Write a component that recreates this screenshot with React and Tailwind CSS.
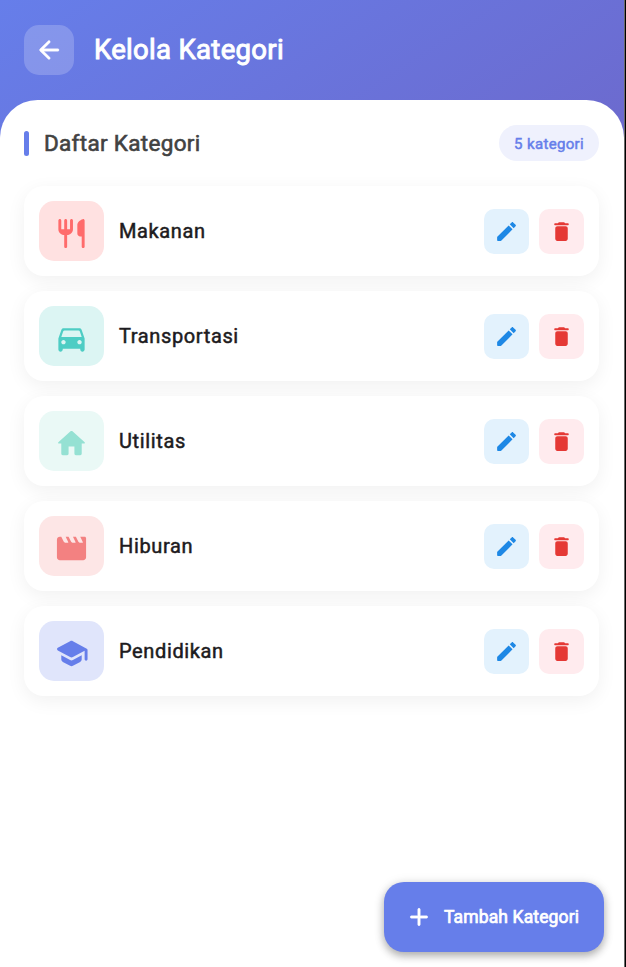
const ICONS = {
  back: 'M19 11H7.83l4.88-4.88c.39-.39.39-1.03 0-1.42-.39-.39-1.02-.39-1.41 0l-6.59 6.59c-.39.39-.39 1.02 0 1.41l6.59 6.59c.39.39 1.02.39 1.41 0 .39-.39.39-1.02 0-1.41L7.83 13H19c.55 0 1-.45 1-1s-.45-1-1-1z',
  add: 'M18 13h-5v5c0 .55-.45 1-1 1s-1-.45-1-1v-5H6c-.55 0-1-.45-1-1s.45-1 1-1h5V6c0-.55.45-1 1-1s1 .45 1 1v5h5c.55 0 1 .45 1 1s-.45 1-1 1z',
  edit: 'M3 17.46v3.04c0 .28.22.5.5.5h3.04c.13 0 .26-.05.35-.15L17.81 9.94l-3.75-3.75L3.15 17.1c-.1.1-.15.22-.15.36zM20.71 7.04c.39-.39.39-1.02 0-1.41l-2.34-2.34c-.39-.39-1.02-.39-1.41 0l-1.83 1.83 3.75 3.75 1.83-1.83z',
  trash: 'M6 19c0 1.1.9 2 2 2h8c1.1 0 2-.9 2-2V9c0-1.1-.9-2-2-2H8c-1.1 0-2 .9-2 2v10zM18 4h-2.5l-.71-.71c-.18-.18-.44-.29-.7-.29H9.91c-.26 0-.52.11-.7.29L8.5 4H6c-.55 0-1 .45-1 1s.45 1 1 1h12c.55 0 1-.45 1-1s-.45-1-1-1z',
  food: 'M16 6v6c0 1.1.9 2 2 2h1v7c0 .55.45 1 1 1s1-.45 1-1V3.13c0-.65-.61-1.13-1.24-.98C17.6 2.68 16 4.51 16 6zM11 9H9V3c0-.55-.45-1-1-1s-1 .45-1 1v6H5V3c0-.55-.45-1-1-1s-1 .45-1 1v6c0 2.21 1.79 4 4 4v8c0 .55.45 1 1 1s1-.45 1-1v-8c2.21 0 4-1.79 4-4V3c0-.55-.45-1-1-1s-1 .45-1 1v6z',
  car: 'M18.92 6.01C18.72 5.42 18.16 5 17.5 5h-11c-.66 0-1.21.42-1.42 1.01L3 12v7.5c0 .82.67 1.5 1.5 1.5S6 20.33 6 19.5V19h12v.5c0 .82.67 1.5 1.5 1.5.82 0 1.5-.67 1.5-1.5V12l-2.08-5.99zM6.5 16c-.83 0-1.5-.67-1.5-1.5S5.67 13 6.5 13s1.5.67 1.5 1.5S7.33 16 6.5 16zm11 0c-.83 0-1.5-.67-1.5-1.5s.67-1.5 1.5-1.5 1.5.67 1.5 1.5-.67 1.5-1.5 1.5zM5 11l1.27-3.82c.14-.4.52-.68.95-.68h9.56c.43 0 .81.28.95.68L19 11H5z',
  home: 'M10 19v-5h4v5c0 .55.45 1 1 1h3c.55 0 1-.45 1-1v-7h1.7c.46 0 .68-.57.33-.87L12.67 3.6c-.38-.34-.96-.34-1.34 0l-8.36 7.53c-.34.3-.13.87.33.87H5v7c0 .55.45 1 1 1h3c.55 0 1-.45 1-1z',
  movie: 'M18 4l1.82 3.64c.08.16-.04.36-.22.36h-1.98c-.38 0-.73-.21-.89-.55L15 4h-2l1.82 3.64c.08.16-.04.36-.22.36h-1.98c-.38 0-.73-.21-.89-.55L10 4H8l1.82 3.64c.08.16-.04.36-.22.36H7.62c-.38 0-.73-.21-.9-.55L5 4H4c-1.1 0-1.99.9-1.99 2L2 18c0 1.1.9 2 2 2h16c1.1 0 2-.9 2-2V5c0-.55-.45-1-1-1h-3z',
  school: 'M5 13.18v2.81c0 .73.4 1.41 1.04 1.76l5 2.73c.6.33 1.32.33 1.92 0l5-2.73c.64-.35 1.04-1.03 1.04-1.76v-2.81l-6.04 3.3c-.6.33-1.32.33-1.92 0L5 13.18zm6.04-9.66l-8.43 4.6c-.69.38-.69 1.38 0 1.76l8.43 4.6c.6.33 1.32.33 1.92 0L21 10.09V16c0 .55.45 1 1 1s1-.45 1-1V9.59c0-.37-.2-.7-.52-.88l-9.52-5.19c-.6-.32-1.32-.32-1.92 0z',
};

const CATEGORIES = [
  { name: 'Makanan', icon: 'food', tone: 'bg-[#ffe1e1] text-[#ff6b6b]' },
  { name: 'Transportasi', icon: 'car', tone: 'bg-[#dcf5f3] text-[#4ecdc4]' },
  { name: 'Utilitas', icon: 'home', tone: 'bg-[#eaf9f6] text-[#95e1d3]' },
  { name: 'Hiburan', icon: 'movie', tone: 'bg-[#fde6e6] text-[#f38181]' },
  { name: 'Pendidikan', icon: 'school', tone: 'bg-[#e0e5fb] text-[#667eea]' },
];

function Icon({ name, className }) {
  return (
    <svg viewBox="0 0 24 24" fill="currentColor" className={`shrink-0 ${className}`} aria-hidden="true">
      <path d={ICONS[name]} />
    </svg>
  );
}

function CategoryCard({ name, icon, tone }) {
  return (
    <li className="flex h-[90px] items-center rounded-[20px] bg-white px-[15px] shadow-[0_5px_19px_rgba(0,0,0,0.06)]">
      <div className={`flex h-[60px] w-[65px] items-start justify-center rounded-[15px] pt-[15px] ${tone}`}>
        <Icon name={icon} className="size-[35px]" />
      </div>
      <span className="ml-[15px] flex-1 text-[20px] leading-[30px] tracking-[0.625px] text-[#1d1b20] [-webkit-text-stroke:0.5px_currentColor]">
        {name}
      </span>
      <div className="flex gap-2.5">
        <button className="flex size-[45px] items-center justify-center rounded-[10px] bg-[#e3f2fd] text-[#1e88e5]" aria-label="Edit">
          <Icon name="edit" className="size-[25px]" />
        </button>
        <button className="flex size-[45px] items-center justify-center rounded-[10px] bg-[#ffebee] text-[#e53935]" aria-label="Hapus">
          <Icon name="trash" className="size-[25px]" />
        </button>
      </div>
    </li>
  );
}

export default function App() {
  return (
    <div className="flex h-[967px] w-[626px] overflow-hidden bg-black font-[Roboto,sans-serif]">
      <div className="flex w-[624px] shrink-0 flex-col bg-[linear-gradient(147.1deg,#667eea,#764ba2)]">
        <header className="flex h-[100px] shrink-0 items-center px-6 text-white">
          <button className="flex size-[50px] items-center justify-center rounded-[15px] bg-white/20" aria-label="Kembali">
            <Icon name="back" className="size-[30px] stroke-current [stroke-width:0.3]" />
          </button>
          <h1 className="ml-5 text-[27.5px] leading-9 tracking-[0.31px] [-webkit-text-stroke:0.95px_currentColor]">Kelola Kategori</h1>
        </header>

        <main className="relative flex-1 rounded-t-[37.5px] bg-white px-6 pr-[25px] pt-[25px]">
          <div className="flex h-9 items-center">
            <span className="h-[25px] w-[5px] rounded-[2.5px] bg-[#667eea]" />
            <h2 className="ml-[15px] flex-1 text-[22.5px] leading-7 tracking-[0.31px] text-[#424242] [-webkit-text-stroke:0.6px_currentColor]">
              Daftar Kategori
            </h2>
            <span className="flex h-9 items-center rounded-full bg-[#eff1fd] px-[15px] pt-0.5 text-[15px] tracking-[0.34px] text-[#667eea] [-webkit-text-stroke:0.5px_currentColor]">
              5 kategori
            </span>
          </div>

          <ul className="mt-[25px] flex flex-col gap-[15px]">
            {CATEGORIES.map((category) => (
              <CategoryCard key={category.name} {...category} />
            ))}
          </ul>

          <button className="absolute bottom-[15px] right-5 flex h-[70px] w-[220px] items-center rounded-[20px] bg-[#667eea] pl-5 text-white shadow-[0_4px_8px_rgba(0,0,0,0.28),0_1px_12px_rgba(0,0,0,0.10)]">
            <Icon name="add" className="size-[30px] stroke-current [stroke-width:0.3]" />
            <span className="ml-2.5 whitespace-nowrap text-[17.5px] tracking-[0.13px] [-webkit-text-stroke:0.7px_currentColor]">Tambah Kategori</span>
          </button>
        </main>
      </div>
      <div className="w-px shrink-0 bg-[#6b6b6b]" />
    </div>
  );
}
